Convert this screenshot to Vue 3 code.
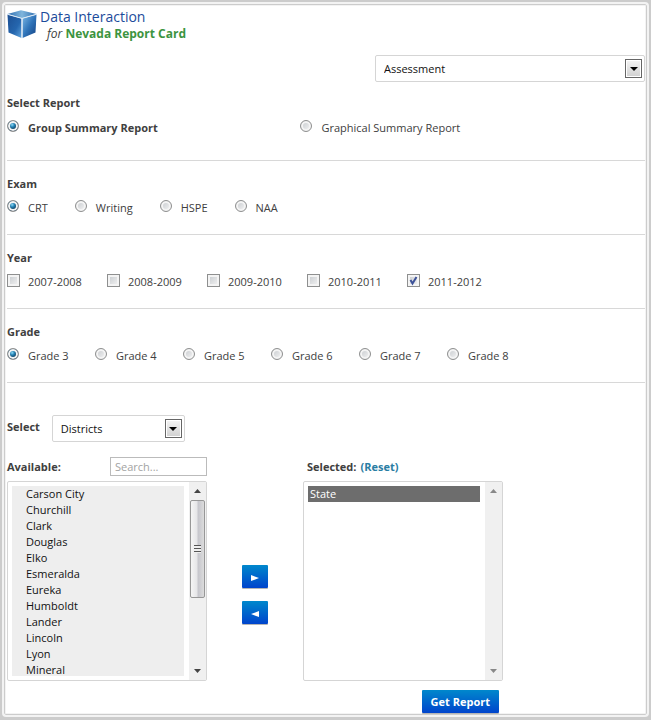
<template>
  <div class="page">
    <main class="panel">
      <header class="brand">
        <svg class="brand-logo" viewBox="0 0 30 29" aria-hidden="true">
          <defs>
            <linearGradient id="cube-left" x1="0" y1="0" x2="1" y2="1">
              <stop offset="0" stop-color="#1c4f93" />
              <stop offset="0.6" stop-color="#2566ae" />
              <stop offset="1" stop-color="#5fa3dc" />
            </linearGradient>
            <linearGradient id="cube-right" x1="0" y1="0" x2="1" y2="1">
              <stop offset="0" stop-color="#7db9e6" />
              <stop offset="0.5" stop-color="#2f74b9" />
              <stop offset="1" stop-color="#123f80" />
            </linearGradient>
            <linearGradient id="cube-top" x1="0" y1="0" x2="1" y2="0">
              <stop offset="0" stop-color="#2d6db0" />
              <stop offset="0.5" stop-color="#7fb5dc" />
              <stop offset="1" stop-color="#2d6db0" />
            </linearGradient>
          </defs>
          <path d="M0.5 4.5 14.5 8.5V28L1.5 22.5Z" fill="url(#cube-left)" />
          <path d="M29.5 4.5 15.5 8.5V28L28.5 22.5Z" fill="url(#cube-right)" />
          <path d="M0.5 4 14 0.3 29.5 4 15 8.2Z" fill="url(#cube-top)" />
          <path d="M0.5 4.3 15 8.4 29.5 4.3M15 8.4V28.4" fill="none" stroke="#dce9f4" stroke-width="1" />
        </svg>
        <h1 class="brand-text">
          <span class="brand-name">Data Interaction</span>
          <span class="brand-sub"><em>for</em> <strong>Nevada Report Card</strong></span>
        </h1>
      </header>

      <div class="topic-row">
        <span class="dropdown dropdown--topic">
          <select v-model="topic" aria-label="Topic">
            <option>Assessment</option>
          </select>
          <span class="dropdown-arrow" aria-hidden="true"></span>
        </span>
      </div>

      <fieldset class="section section--report">
        <legend class="section-title">Select Report</legend>
        <div class="report-grid">
          <label v-for="item in reports" :key="item" class="choice" :class="{ 'choice--strong': report === item }">
            <input v-model="report" type="radio" name="report" :value="item" />
            <span>{{ item }}</span>
          </label>
        </div>
      </fieldset>

      <fieldset class="section">
        <legend class="section-title">Exam</legend>
        <div class="choices">
          <label v-for="item in exams" :key="item" class="choice">
            <input v-model="exam" type="radio" name="exam" :value="item" />
            <span>{{ item }}</span>
          </label>
        </div>
      </fieldset>

      <fieldset class="section">
        <legend class="section-title">Year</legend>
        <div class="choices choices--years">
          <label v-for="item in years" :key="item" class="choice">
            <span class="check">
              <input v-model="selectedYears" type="checkbox" :value="item" />
              <svg v-if="selectedYears.includes(item)" class="check-mark" viewBox="0 0 13 13" aria-hidden="true">
                <path d="M3.5 6 5.5 9.5 9.5 3" fill="none" stroke="#3d5299" stroke-width="2" />
              </svg>
            </span>
            <span>{{ item }}</span>
          </label>
        </div>
      </fieldset>

      <fieldset class="section">
        <legend class="section-title">Grade</legend>
        <div class="choices choices--grades">
          <label v-for="item in grades" :key="item" class="choice">
            <input v-model="grade" type="radio" name="grade" :value="item" />
            <span>{{ item }}</span>
          </label>
        </div>
      </fieldset>

      <div class="level-row">
        <label for="level">Select</label>
        <span class="dropdown dropdown--level">
          <select id="level" v-model="level">
            <option>Districts</option>
          </select>
          <span class="dropdown-arrow" aria-hidden="true"></span>
        </span>
      </div>

      <div class="picker">
        <div class="picker-column">
          <div class="picker-head">
            <label for="available">Available:</label>
            <input v-model="search" class="search" type="text" placeholder="Search..." aria-label="Search available" />
          </div>
          <div class="listbox">
            <select id="available" v-model="picked" class="list list--available" multiple>
              <option v-for="item in filtered" :key="item">{{ item }}</option>
            </select>
            <span class="scrollbar" aria-hidden="true">
              <svg class="scroll-arrow" viewBox="0 0 7 4"><path d="M0 4 3.5 0 7 4Z" /></svg>
              <span class="scroll-thumb"><i></i></span>
              <svg class="scroll-arrow scroll-arrow--down" viewBox="0 0 7 4"><path d="M0 0H7L3.5 4Z" /></svg>
            </span>
          </div>
        </div>

        <div class="picker-buttons">
          <button type="button" class="button button--move" aria-label="Add">
            <svg viewBox="0 0 8 6" aria-hidden="true"><path d="M0 0 8 3 0 6Z" fill="#fff" /></svg>
          </button>
          <button type="button" class="button button--move" aria-label="Remove">
            <svg viewBox="0 0 8 6" aria-hidden="true"><path d="M8 0 0 3 8 6Z" fill="#fff" /></svg>
          </button>
        </div>

        <div class="picker-column">
          <div class="picker-head picker-head--selected">
            <label for="selected">Selected:</label>
            <a href="#" @click.prevent="chosen = []">(Reset)</a>
          </div>
          <div class="listbox">
            <select id="selected" v-model="chosen" class="list" multiple>
              <option>State</option>
            </select>
            <span class="scrollbar scrollbar--idle" aria-hidden="true">
              <svg class="scroll-arrow" viewBox="0 0 7 4"><path d="M0 4 3.5 0 7 4Z" /></svg>
              <svg class="scroll-arrow scroll-arrow--down" viewBox="0 0 7 4"><path d="M0 0H7L3.5 4Z" /></svg>
            </span>
          </div>
          <button type="button" class="button button--submit">Get Report</button>
        </div>
      </div>
    </main>
  </div>
</template>

<script setup>
import { computed, ref } from 'vue'

const reports = ['Group Summary Report', 'Graphical Summary Report']
const exams = ['CRT', 'Writing', 'HSPE', 'NAA']
const years = ['2007-2008', '2008-2009', '2009-2010', '2010-2011', '2011-2012']
const grades = ['Grade 3', 'Grade 4', 'Grade 5', 'Grade 6', 'Grade 7', 'Grade 8']
const districts = [
  'Carson City', 'Churchill', 'Clark', 'Douglas', 'Elko', 'Esmeralda',
  'Eureka', 'Humboldt', 'Lander', 'Lincoln', 'Lyon', 'Mineral'
]

const topic = ref('Assessment')
const report = ref('Group Summary Report')
const exam = ref('CRT')
const selectedYears = ref(['2011-2012'])
const grade = ref('Grade 3')
const level = ref('Districts')
const search = ref('')
const picked = ref([])
const chosen = ref(['State'])

const filtered = computed(() => (
  districts.filter((name) => name.toLowerCase().includes(search.value.toLowerCase()))
))
</script>

<style>
body {
  margin: 0;
  background: #ccc;
}
</style>

<style scoped>
.page {
  padding: 2px;
  color: #404040;
  font: 11px/16px "Open Sans", "Noto Sans", sans-serif;
}

.page *,
.page {
  box-sizing: border-box;
}

.panel {
  padding: 4px 2px 2px;
  border: 2px solid #f3f3f3;
  border-radius: 4px;
  background: #fff;
  box-shadow: inset 0 0 0 1px #ccc, inset 0 0 0 2px #f3f3f3;
}

select,
input,
button {
  margin: 0;
  font: inherit;
}

.brand {
  display: flex;
  align-items: flex-start;
  gap: 3px;
  padding-left: 1px;
}

.brand-logo {
  width: 30px;
  height: 29px;
  margin-top: 2px;
}

.brand-text {
  display: flex;
  flex-direction: column;
  margin: 0;
  font-size: 12px;
  font-weight: 400;
}

.brand-name {
  color: #1b4b9b;
  font-size: 14px;
  line-height: 18px;
}

.brand-sub {
  padding-left: 7px;
}

.brand-sub strong {
  color: #3c9440;
}

.topic-row {
  display: flex;
  justify-content: flex-end;
  margin-top: 13px;
}

.dropdown {
  position: relative;
  display: block;
}

.dropdown--topic {
  width: 270px;
}

.dropdown--level {
  width: 133px;
}

.dropdown select {
  display: block;
  width: 100%;
  height: 27px;
  padding: 0 24px 0 8px;
  border: 1px solid #d5d5d5;
  border-radius: 2px;
  background: #fff;
  color: #111;
  appearance: none;
}

.dropdown-arrow {
  position: absolute;
  top: 4px;
  right: 3px;
  display: grid;
  width: 17px;
  height: 19px;
  border: 1px solid #666;
  background: linear-gradient(#f4f4f4, #d0d0d0);
  box-shadow: inset 0 0 0 1px #fff;
  place-items: center;
  pointer-events: none;
}

.dropdown-arrow::after {
  border: 4px solid transparent;
  border-top-color: #000;
  border-bottom: 0;
  content: "";
}

.section {
  min-width: 0;
  margin: 0 0 0 1px;
  padding: 15px 0 18px;
  border: 0;
  border-bottom: 1px solid #d8d8d8;
}

.section--report {
  padding-top: 13px;
  padding-bottom: 24px;
}

.section-title {
  float: left;
  width: 100%;
  margin-bottom: 8px;
  padding: 0;
  font-weight: 700;
}

.choices,
.report-grid {
  clear: both;
}

.choices {
  display: flex;
  flex-wrap: wrap;
  gap: 0 27px;
}

.choices--years,
.choices--grades {
  column-gap: 0;
}

.choices--years .choice {
  width: 100px;
}

.choices--grades .choice {
  width: 88px;
}

.report-grid {
  display: grid;
  grid-template-columns: 46% 1fr;
}

.choice {
  display: flex;
  align-items: flex-start;
  gap: 8px;
}

.report-grid .choice {
  padding-top: 1px;
}

.choice--strong {
  font-weight: 700;
}

.choice input {
  display: block;
  width: 13px;
  height: 13px;
  border: 1px solid #8e8f8f;
  background: linear-gradient(135deg, #c4c8cc, #f6f6f6);
  box-shadow: inset 0 0 0 2px #f4f4f4;
  appearance: none;
}

.choice input[type="radio"] {
  width: 12px;
  height: 12px;
  margin-right: 1px;
  border-radius: 50%;
}

.choice input[type="radio"]:checked {
  background: radial-gradient(circle at 42% 38%, #8fdcf8 0, #2583b5 25%, #0b3350 60%);
}

.check {
  position: relative;
}

.check-mark {
  position: absolute;
  inset: 0;
  width: 13px;
  height: 13px;
  pointer-events: none;
}

.level-row {
  display: flex;
  align-items: center;
  gap: 12px;
  margin: 32px 0 15px 1px;
  font-weight: 700;
}

.level-row label {
  padding-bottom: 4px;
}

.level-row select {
  font-weight: 400;
}

.picker {
  display: flex;
  align-items: flex-start;
  padding-left: 1px;
}

.picker-column {
  display: flex;
  flex-direction: column;
  width: 200px;
}

.picker-head {
  display: flex;
  align-items: center;
  justify-content: space-between;
  height: 19px;
  margin-bottom: 5px;
  font-weight: 700;
}

.picker-head--selected {
  justify-content: flex-start;
  gap: 4px;
  padding-left: 4px;
}

.picker-head a {
  color: #2a7da3;
  text-decoration: none;
}

.search {
  width: 97px;
  height: 19px;
  padding: 0 4px;
  border: 1px solid #bbb;
  background: #fff;
  color: #333;
  font-weight: 400;
}

.search::placeholder {
  color: #a3a3a3;
}

.listbox {
  display: flex;
  gap: 5px;
  height: 200px;
  padding-left: 4px;
  border: 1px solid #d5d5d5;
  border-radius: 2px;
}

.list {
  flex: 1;
  min-width: 0;
  height: 190px;
  margin: 4px 0;
  padding: 0;
  border: 0;
  border-radius: 0;
  outline: 0;
  background: #fff;
  color: #111;
  scrollbar-width: none;
}

.list--available {
  background: #eee;
}

.list option {
  min-height: 16px;
  padding: 0 2px 1px;
  border-radius: 0;
}

.list--available option {
  padding-left: 14px;
}

.list option:checked {
  background: linear-gradient(#6d6d6d, #6d6d6d);
  -webkit-text-fill-color: #fff;
}

.scrollbar {
  display: flex;
  flex-direction: column;
  align-items: center;
  width: 17px;
  padding: 7px 1px 7px 0;
  background: #f0f0f0;
}

.scroll-arrow {
  width: 7px;
  height: 4px;
  fill: #444;
}

.scroll-arrow--down {
  margin-top: auto;
}

.scrollbar--idle .scroll-arrow {
  fill: #888;
}

.scroll-thumb {
  display: grid;
  width: 15px;
  height: 98px;
  margin-top: 7px;
  border: 1px solid #979797;
  border-radius: 2px;
  background: linear-gradient(90deg, #f5f5f5, #e6e6e8 45%, #c6c6cc 55%, #dcdcdc);
  place-items: center;
}

.scroll-thumb i {
  width: 7px;
  height: 8px;
  background: repeating-linear-gradient(#555 0, #555 1px, #eee 1px, #eee 3px);
}

.picker-buttons {
  display: flex;
  flex-direction: column;
  gap: 13px;
  margin: 108px 35px 0;
}

.button {
  height: 23px;
  border: 0;
  border-radius: 1px;
  background: linear-gradient(#0088cc, #0044cc);
  box-shadow: 0 1px 0 #b5b5b5;
  color: #fff;
  cursor: pointer;
}

.button--move {
  display: grid;
  width: 26px;
  padding: 2px 0 0;
  place-items: center;
}

.button--move svg {
  width: 8px;
  height: 6px;
}

.button--submit {
  align-self: flex-end;
  margin: 9px 4px 0 0;
  padding: 0 9px;
  font-weight: 700;
}
</style>
